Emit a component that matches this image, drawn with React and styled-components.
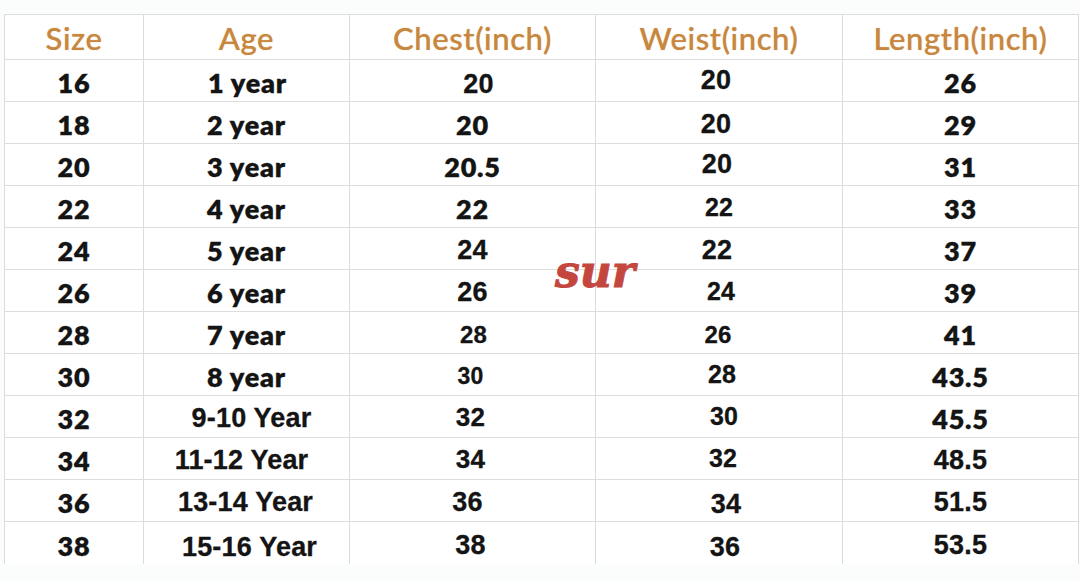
import React from "react";
import styled, { createGlobalStyle } from "styled-components";

const GlobalStyle = createGlobalStyle`
  html, body {
    margin: 0;
    padding: 0;
    background: #fbfcfc;
  }
  #root {
    width: 1080px;
    height: 581px;
    overflow: hidden;
  }
`;

const cols = [139, 206, 246, 247, 236];

const header = ["Size", "Age", "Chest(inch)", "Weist(inch)", "Length(inch)"];

// [text, font, dx, dy, size]
const rows = [
  [["16"], ["1 year", "c", 1], ["20", "a", 6, 2], ["20", "a", -3, -2], ["26"]],
  [["18"], ["2 year"], ["20"], ["20", "a", -3], ["29"]],
  [["20"], ["3 year"], ["20.5"], ["20", "a", -2, -2], ["31"]],
  [["22"], ["4 year"], ["22"], ["22", "a", 0, -1, 25], ["33"]],
  [["24"], ["5 year"], ["24", "a"], ["22", "a", -2], ["37"]],
  [["26"], ["6 year"], ["26", "a"], ["24", "a", 2, -1, 25], ["39"]],
  [["28"], ["7 year"], ["28", "a", 1, 0, 24], ["26", "a", -1, 0, 24], ["41"]],
  [["30"], ["8 year"], ["30", "a", -2, 0, 23], ["28", "a", 3, -2, 25], ["43.5"]],
  [["32"], ["9-10 Year", "a", 5], ["32", "a", -2, -2, 26], ["30", "a", 5, -2, 25], ["45.5"]],
  [["34"], ["11-12 Year", "a", -5], ["34", "a", -2, -2, 26], ["32", "a", 4, -2, 25], ["48.5", "a"]],
  [["36"], ["13-14 Year", "a", -1], ["36", "a", -5], ["34", "a", 7, 2], ["51.5", "a"]],
  [["38"], ["15-16 Year", "a", 3, 2], ["38", "a", -2], ["36", "a", 6, 2], ["53.5", "a"]],
];

const Page = styled.div`
  position: relative;
  padding: 14px 0 0 4px;
`;

const Table = styled.div`
  display: grid;
  grid-template-columns: ${cols.map((c) => `${c}px`).join(" ")};
  grid-template-rows: 45px repeat(12, 42px);
  border-left: 1px solid #d9dcdc;
  border-top: 1px solid #dcdede;
  width: max-content;
  background: #ffffff;
`;

const Cell = styled.div`
  display: flex;
  align-items: center;
  justify-content: center;
  box-sizing: border-box;
  border-right: 1px solid #d9dcdc;
  border-bottom: ${(p) => (p.$last ? "none" : "1px solid #dcdede")};
  padding-left: ${(p) => (p.$dx > 0 ? p.$dx * 2 : 0)}px;
  padding-right: ${(p) => (p.$dx < 0 ? -p.$dx * 2 : 0)}px;
  padding-top: ${(p) => (p.$dy > 0 ? p.$dy * 2 : 0)}px;
  padding-bottom: ${(p) => (p.$dy < 0 ? -p.$dy * 2 : 0)}px;
  color: #141414;
  white-space: nowrap;
`;

const HeadCell = styled(Cell)`
  color: #c8873f;
  font-family: Lato, "Open Sans", sans-serif;
  font-weight: 500;
  font-size: 31px;
  letter-spacing: 0.6px;
  padding-top: 2px;
  text-shadow: 0 0 1px rgba(200, 135, 63, 0.7);
`;

const Text = styled.span`
  font-family: ${(p) =>
    p.$font === "a"
      ? `"Liberation Sans", Arial, sans-serif`
      : `Lato, "Open Sans", sans-serif`};
  font-weight: ${(p) => (p.$font === "a" ? 700 : 800)};
  font-size: ${(p) => p.$size}px;
  letter-spacing: ${(p) => (p.$font === "a" ? "0.2px" : "0.8px")};
  line-height: 1;
  padding-top: 4px;
  -webkit-text-stroke: 0.3px #141414;
`;

const Mark = styled.div`
  position: absolute;
  left: 555px;
  top: 246px;
  font-family: "DejaVu Serif", "Liberation Serif", serif;
  font-style: italic;
  font-weight: 700;
  font-size: 44px;
  color: #c4473f;
  -webkit-text-stroke: 1px #c4473f;
`;

export default function App() {
  return (
    <>
      <GlobalStyle />
      <Page>
        <Table>
          {header.map((h) => (
            <HeadCell key={h}>{h}</HeadCell>
          ))}
          {rows.map((row, ri) =>
            row.map(([t, f = "c", dx = 0, dy = 0, size], ci) => (
              <Cell key={`${ri}-${ci}`} $dx={dx} $dy={dy} $last={ri === rows.length - 1}>
                <Text $font={f} $size={size || (f === "a" ? 27 : 27)}>
                  {t}
                </Text>
              </Cell>
            ))
          )}
        </Table>
        <Mark>sur</Mark>
      </Page>
    </>
  );
}
